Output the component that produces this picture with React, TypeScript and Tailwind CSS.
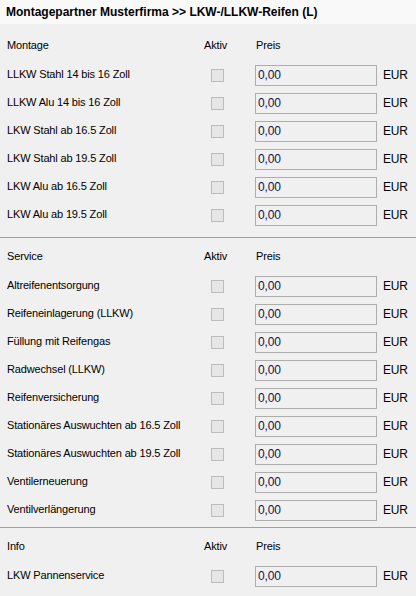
const font = { fontFamily: '"Liberation Sans", Arial, sans-serif' };

type Section = { title: string; items: string[]; pt: string; pb: string };

const sections: Section[] = [
  {
    title: "Montage",
    pt: "pt-[8px]",
    pb: "pb-[8px]",
    items: [
      "LLKW Stahl 14 bis 16 Zoll",
      "LLKW Alu 14 bis 16 Zoll",
      "LKW Stahl ab 16.5 Zoll",
      "LKW Stahl ab 19.5 Zoll",
      "LKW Alu ab 16.5 Zoll",
      "LKW Alu ab 19.5 Zoll",
    ],
  },
  {
    title: "Service",
    pt: "pt-[5px]",
    pb: "pb-[3px]",
    items: [
      "Altreifenentsorgung",
      "Reifeneinlagerung (LLKW)",
      "Füllung mit Reifengas",
      "Radwechsel (LLKW)",
      "Reifenversicherung",
      "Stationäres Auswuchten ab 16.5 Zoll",
      "Stationäres Auswuchten ab 19.5 Zoll",
      "Ventilerneuerung",
      "Ventilverlängerung",
    ],
  },
  {
    title: "Info",
    pt: "pt-[5px]",
    pb: "pb-[6px]",
    items: ["LKW Pannenservice"],
  },
];

function Row({ label }: { label: string }) {
  return (
    <div className="flex h-[28px] items-center">
      <div className="w-[204px] pb-[2px]">{label}</div>
      <div className="w-[44px]">
        <div className="h-[13px] w-[13px] border border-[#bcbcbc] bg-[#e6e6e6]" />
      </div>
      <div className="flex h-[21px] w-[122px] items-center border border-[#adadad] bg-[#f0f0f0] pl-[2px] text-[12px] text-[#14104a]">
        0,00
      </div>
      <div className="ml-[6px] pb-[1px] text-[12px]">EUR</div>
    </div>
  );
}

export default function App() {
  return (
    <div
      className="h-[596px] w-[416px] overflow-hidden bg-[#f0f0f0] text-[11px] tracking-[-0.15px] text-black"
      style={font}
    >
      <div className="flex h-[24px] items-center bg-[#f9f9f9] pl-[6px] text-[12px] font-bold tracking-normal">
        Montagepartner Musterfirma &gt;&gt; LKW-/LLKW-Reifen (L)
      </div>
      {sections.map((s, i) => (
        <div key={s.title}>
          <div className={`px-[7px] ${s.pt} ${s.pb}`}>
            <div className="flex h-[29px] items-center pb-[2px]">
              <div className="w-[197px]">{s.title}</div>
              <div className="w-[52px]">Aktiv</div>
              <div>Preis</div>
            </div>
            {s.items.map((it) => (
              <Row key={it} label={it} />
            ))}
          </div>
          {i < sections.length - 1 && <div className="h-px bg-[#a0a0a0]" />}
        </div>
      ))}
    </div>
  );
}
